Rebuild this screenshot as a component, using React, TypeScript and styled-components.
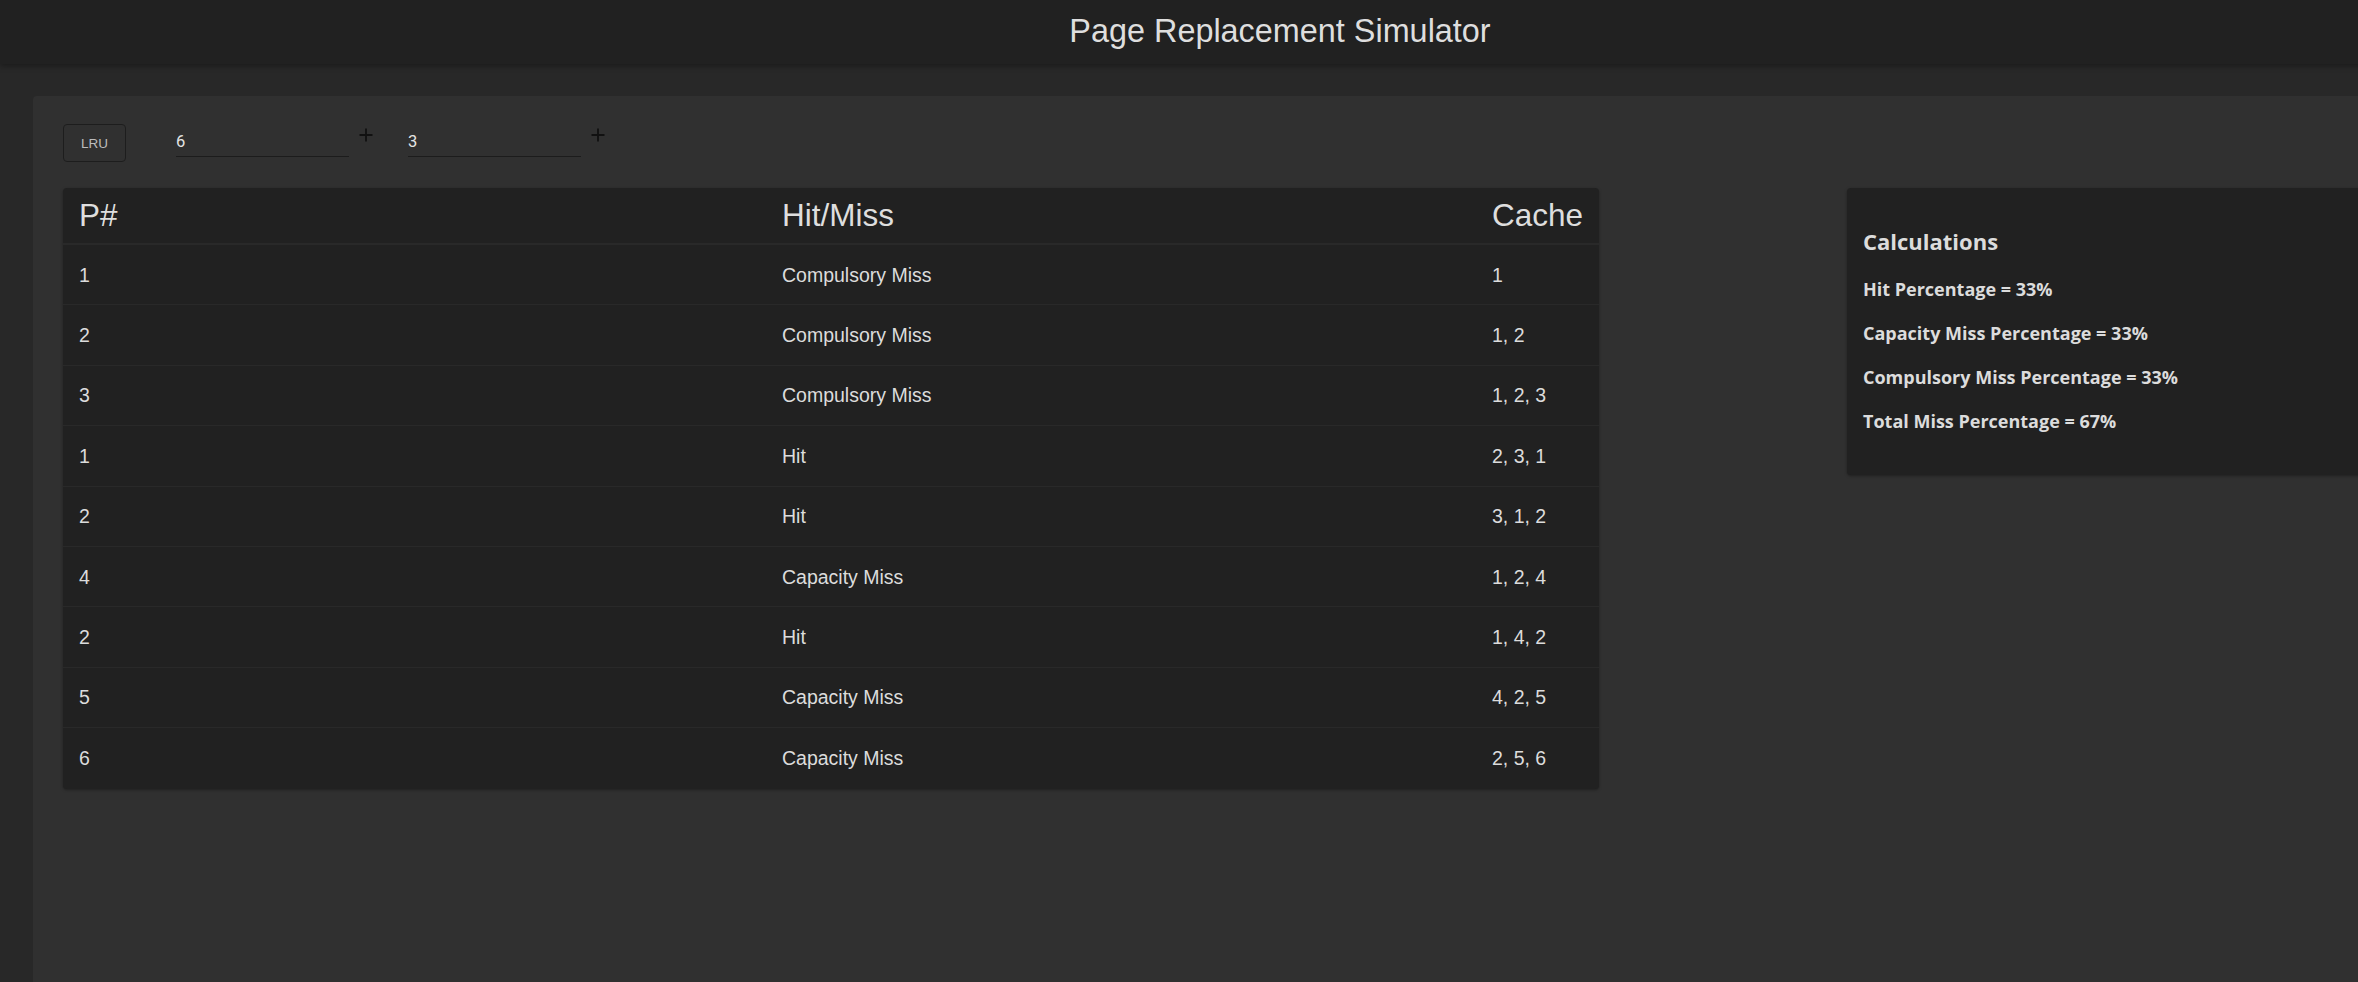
import React, { useState } from 'react';
import styled, { createGlobalStyle } from 'styled-components';

const GlobalStyle = createGlobalStyle`
  html, body {
    margin: 0;
    padding: 0;
    background: #282828;
    overflow: hidden;
  }
  * { box-sizing: border-box; }
`;

const Page = styled.div`
  width: 2560px;
  min-height: 100vh;
  display: flex;
  flex-direction: column;
  background: #282828;
  font-family: 'Liberation Sans', Arial, sans-serif;
  color: #dcdcdc;
`;

const Header = styled.header`
  height: 64px;
  background: #212121;
  box-shadow: 0 2px 6px rgba(0, 0, 0, 0.35);
  display: flex;
  justify-content: center;
  position: relative;
  z-index: 1;
`;

const Title = styled.h1`
  margin: 0;
  font-size: 32.4px;
  font-weight: 400;
  line-height: 62px;
  color: #dedede;
`;

const Body = styled.main`
  flex: 1;
  display: flex;
  padding: 32px 0 0 33px;
`;

const Panel = styled.section`
  flex: 1;
  background: #303030;
  border-radius: 4px 0 0 0;
  padding: 28px 30px 0 30px;
`;

const Toolbar = styled.div`
  display: flex;
  align-items: flex-start;
  height: 38px;
  margin-bottom: 26px;
`;

const AlgoButton = styled.button`
  width: 63px;
  height: 38px;
  background: transparent;
  border: 1px solid #1d1d1d;
  border-radius: 4px;
  color: #bdbdbd;
  font-family: 'Liberation Sans', Arial, sans-serif;
  font-size: 13.5px;
  padding: 0;
  margin-right: 50px;
  cursor: pointer;
`;

const NumberInput = styled.input`
  width: 173px;
  height: 30px;
  margin-top: 3px;
  padding: 4px 0 5px;
  background: transparent;
  border: none;
  border-bottom: 1px solid #1c1c1c;
  outline: none;
  color: #e4e4e4;
  font-family: Roboto, 'Liberation Sans', sans-serif;
  font-size: 16.5px;
  line-height: 20px;
`;

const AddButton = styled.button<{ $last?: boolean }>`
  width: 14px;
  height: 14px;
  margin: 4px ${(p) => (p.$last ? 0 : 35)}px 0 10px;
  padding: 0;
  background: none;
  border: none;
  display: flex;
  cursor: pointer;
`;

const PlusIcon = () => (
  <svg width="14" height="14" viewBox="0 0 14 14">
    <path d="M7 0.5v13M0.5 7h13" stroke="#111" strokeWidth="1.8" fill="none" />
  </svg>
);

const ContentRow = styled.div`
  display: flex;
  align-items: flex-start;
  gap: 248px;
`;

const TableCard = styled.div`
  width: 1536px;
  flex-shrink: 0;
  background: #212121;
  border-radius: 4px;
  box-shadow: 0 1px 3px rgba(0, 0, 0, 0.35);
  overflow: hidden;
`;

const ResultTable = styled.table`
  width: 100%;
  table-layout: fixed;
  border-collapse: separate;
  border-spacing: 0;
`;

const Th = styled.th`
  box-sizing: border-box;
  height: 57px;
  padding: 0 16px;
  text-align: left;
  font-size: 31.5px;
  font-weight: 400;
  color: #dedede;
  border-bottom: 2px solid #292929;
`;

const Td = styled.td<{ $last?: boolean }>`
  box-sizing: border-box;
  height: 60.4px;
  padding: 1px 16px 0;
  font-size: 19.5px;
  color: #dcdcdc;
  border-bottom: ${(p) => (p.$last ? 'none' : '1px solid #292929')};
`;

const CalcCard = styled.aside`
  flex: 1;
  min-width: 600px;
  background: #212121;
  border-radius: 4px;
  box-shadow: 0 1px 3px rgba(0, 0, 0, 0.35);
  padding: 38px 16px 42px;
  font-family: 'Open Sans', 'Noto Sans', sans-serif;
  font-weight: 700;
  color: #dcdcdc;
`;

const CalcTitle = styled.h3`
  margin: 0 0 21px;
  font-size: 22px;
  line-height: 30px;
  font-weight: 700;
`;

const CalcLine = styled.p`
  margin: 0 0 20px;
  font-size: 18px;
  line-height: 24px;

  &:last-child { margin-bottom: 0; }
`;

const rows = [
  { page: 1, result: 'Compulsory Miss', cache: '1' },
  { page: 2, result: 'Compulsory Miss', cache: '1, 2' },
  { page: 3, result: 'Compulsory Miss', cache: '1, 2, 3' },
  { page: 1, result: 'Hit', cache: '2, 3, 1' },
  { page: 2, result: 'Hit', cache: '3, 1, 2' },
  { page: 4, result: 'Capacity Miss', cache: '1, 2, 4' },
  { page: 2, result: 'Hit', cache: '1, 4, 2' },
  { page: 5, result: 'Capacity Miss', cache: '4, 2, 5' },
  { page: 6, result: 'Capacity Miss', cache: '2, 5, 6' },
];

export default function App() {
  const [page, setPage] = useState('6');
  const [frames, setFrames] = useState('3');

  const total = rows.length;
  const pct = (n: number) => Math.round((n / total) * 100);
  const hits = rows.filter((r) => r.result === 'Hit').length;
  const capacity = rows.filter((r) => r.result === 'Capacity Miss').length;
  const compulsory = rows.filter((r) => r.result === 'Compulsory Miss').length;

  return (
    <>
      <GlobalStyle />
      <Page>
        <Header>
          <Title>Page Replacement Simulator</Title>
        </Header>
        <Body>
          <Panel>
            <Toolbar>
              <AlgoButton>LRU</AlgoButton>
              <NumberInput value={page} onChange={(e) => setPage(e.target.value)} />
              <AddButton aria-label="add page"><PlusIcon /></AddButton>
              <NumberInput value={frames} onChange={(e) => setFrames(e.target.value)} />
              <AddButton $last aria-label="add frame"><PlusIcon /></AddButton>
            </Toolbar>

            <ContentRow>
              <TableCard>
                <ResultTable>
                  <colgroup>
                    <col style={{ width: 703 }} />
                    <col style={{ width: 710 }} />
                    <col />
                  </colgroup>
                  <thead>
                    <tr>
                      <Th>P#</Th>
                      <Th>Hit/Miss</Th>
                      <Th>Cache</Th>
                    </tr>
                  </thead>
                  <tbody>
                    {rows.map((r, i) => {
                      const last = i === rows.length - 1;
                      return (
                        <tr key={i}>
                          <Td $last={last}>{r.page}</Td>
                          <Td $last={last}>{r.result}</Td>
                          <Td $last={last}>{r.cache}</Td>
                        </tr>
                      );
                    })}
                  </tbody>
                </ResultTable>
              </TableCard>

              <CalcCard>
                <CalcTitle>Calculations</CalcTitle>
                <CalcLine>Hit Percentage = {pct(hits)}%</CalcLine>
                <CalcLine>Capacity Miss Percentage = {pct(capacity)}%</CalcLine>
                <CalcLine>Compulsory Miss Percentage = {pct(compulsory)}%</CalcLine>
                <CalcLine>Total Miss Percentage = {pct(capacity + compulsory)}%</CalcLine>
              </CalcCard>
            </ContentRow>
          </Panel>
        </Body>
      </Page>
    </>
  );
}
